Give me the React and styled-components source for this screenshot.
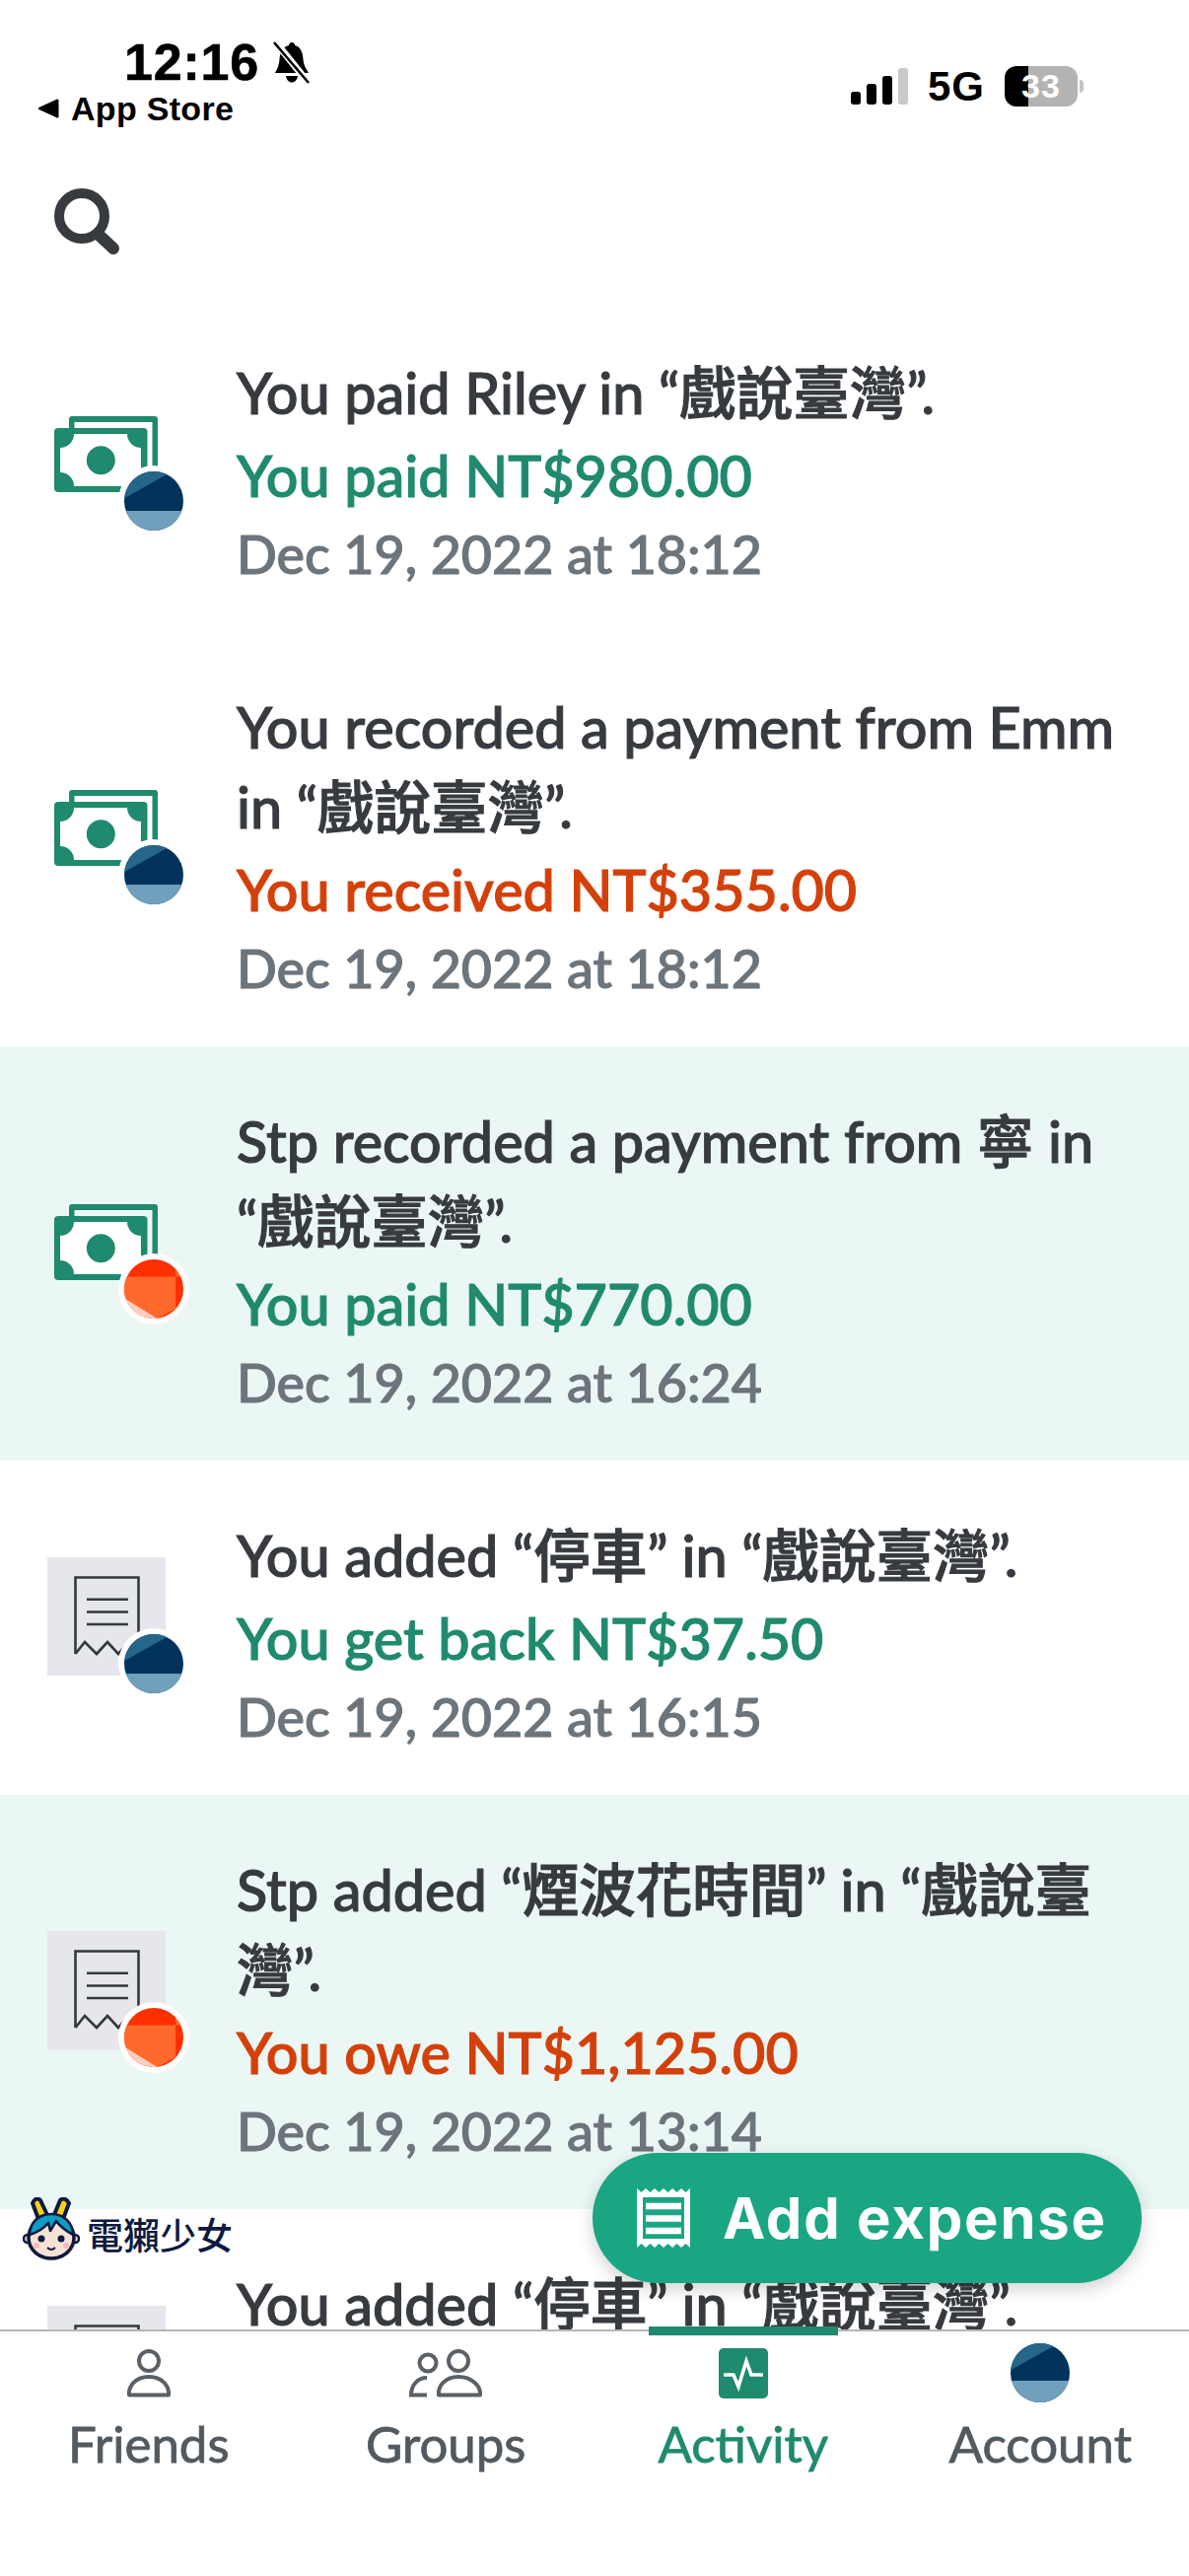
import React from "react";
import styled, { createGlobalStyle } from "styled-components";

const Global = createGlobalStyle`
  html, body { margin: 0; padding: 0; background: #fff; }
  * { box-sizing: border-box; }
`;
const LATO = `Lato, "Noto Sans CJK TC", sans-serif`;
const GREEN = "#1f8a6d";

const Page = styled.div`
  position: relative; width: 1206px; height: 2612px; overflow: hidden;
  display: flex; flex-direction: column; background: #fff; font-family: ${LATO};
`;
const StatusBar = styled.div`
  height: 160px; padding: 38px 107px 0 38px; display: flex; justify-content: space-between;
  font-family: "Liberation Sans", sans-serif; font-weight: 700; color: #000;
`;
const StatusLeft = styled.div`display: flex; flex-direction: column;`;
const TimeRow = styled.div`display: flex; align-items: center; gap: 12px; margin-left: 88px; height: 50px;`;
const Time = styled.span`font-size: 52px; line-height: 50px; letter-spacing: 0.8px; -webkit-text-stroke: 0.6px #000;`;
const BackRow = styled.div`display: flex; align-items: center; gap: 12px; height: 40px; margin-top: 2px;`;
const BackText = styled.span`font-size: 34px; line-height: 40px; letter-spacing: 0.3px;`;
const StatusRight = styled.div`display: flex; align-items: center; height: 41px; margin-top: 29px; gap: 20px;`;
const Net = styled.span`font-size: 42px; line-height: 41px; letter-spacing: 1px;`;
const Battery = styled.div`
  position: relative; width: 74px; height: 41px; border-radius: 12px; overflow: hidden;
  background: linear-gradient(90deg, #000 0 24px, #b3b3b3 24px);
  color: #fff; font-size: 34px; line-height: 41px; text-align: center; letter-spacing: 1px;
`;
const BatteryWrap = styled.div`display: flex; align-items: center; gap: 2px;`;
const BatteryTip = styled.div`width: 4px; height: 13px; border-radius: 0 4px 4px 0; background: #c5c5c5;`;
const SearchRow = styled.div`height: 142px; padding: 31px 0 0 55px;`;
const List = styled.div`flex: 1; min-height: 0; overflow: hidden;`;
const Row = styled.div`
  display: flex; align-items: center; gap: 72px; padding: 55px 60px 41px 48px;
  background: ${p => (p.$hl ? "#ebf7f5" : "#fff")};
`;
const Tile = styled.div`
  position: relative; flex: none; width: 120px; height: 120px; margin-bottom: 38px;
  background: ${p => (p.$receipt ? "#e6e7ec" : "transparent")};
`;
const Body = styled.div`
  flex: 1; min-width: 0; font-weight: 500; -webkit-text-stroke: 1.1px currentColor;
`;
const Title = styled.div`color: #373b3f; font-size: 57.5px; line-height: 81px;`;
const Amount = styled.div`
  margin-top: 3px; color: ${p => (p.$owe ? "#d4400a" : GREEN)}; font-size: 57.5px; line-height: 82px;
`;
const When = styled.div`color: #6c747c; font-size: 53.8px; line-height: 77px;`;
const Nav = styled.nav`
  position: relative; flex: none; height: 250px; background: #fff; border-top: 2px solid #b5b6b8;
  display: grid; grid-template-columns: repeat(4, 1fr);
`;
const Tab = styled.div`
  display: flex; flex-direction: column; align-items: center; height: 144px;
  color: ${p => (p.$active ? GREEN : "#52595f")};
  font-size: 51px; line-height: 60px; -webkit-text-stroke: 0.8px currentColor;
`;
const TabIcon = styled.div`
  height: ${p => (p.$avatar ? 86 : 81)}px; margin-top: ${p => (p.$avatar ? 12 : 17)}px;
  display: flex; align-items: flex-start; justify-content: center;
`;
const Indicator = styled.div`position: absolute; left: 658px; top: -5px; width: 192px; height: 9px; background: ${GREEN};`;
const Fab = styled.div`
  position: absolute; left: 601px; top: 2183px; width: 557px; height: 132px; border-radius: 66px;
  background: #1aa683; color: #fff; display: flex; align-items: center; gap: 33px; padding-left: 45px;
  font-size: 58px; font-weight: 700; letter-spacing: 1.8px;
  box-shadow: 0 6px 18px rgba(0,0,0,.18); font-family: Inter, sans-serif;
`;
const Mark = styled.div`position: absolute; left: 23px; top: 2228px; display: flex; align-items: center; gap: 7px;`;
const MarkText = styled.span`
  font-family: "Noto Sans CJK TC", sans-serif; font-size: 37px; line-height: 50px; font-weight: 500; color: #0e1a3f; margin-top: 10px;
`;

const Cash = () => (
  <svg width="105" height="77" viewBox="0 0 105 77" style={{ position: "absolute", left: 7, top: 22 }}>
    <path d="M15 12V3Q15 0 18 0H102Q105 0 105 3V62H99.5V6H20.5V12Z" fill={GREEN} />
    <rect x="0" y="12" width="94.5" height="65" rx="4" fill={GREEN} />
    <path d="M20 18H74A14 14 0 0 0 88 32V57A14 14 0 0 0 74 71H20A14 14 0 0 0 6 57V32A14 14 0 0 0 20 18Z" fill="#fff" />
    <circle cx="47.3" cy="44.7" r="14.5" fill={GREEN} />
  </svg>
);
const Receipt = () => (
  <svg width="120" height="120" viewBox="0 0 120 120" style={{ position: "absolute", left: 0, top: 0 }} fill="none" stroke="#35393d" strokeWidth="2.6">
    <path d="M28.500 98V20.500H92.500V80" />
    <path d="M28.500 98L38 86L50 98L61 86L72 98L83 86L92 96" />
    <path d="M40 42.700H82M40 55.500H82M40 68H82" />
  </svg>
);
const AvatarSvg = styled.svg`position: absolute; left: 72px; top: 72px;`;
const BlueAvatar = () => (
  <AvatarSvg width="72" height="72" viewBox="-36 -36 72 72">
    <circle r="36" fill="#fff" />
    <clipPath id="ba"><circle r="30" /></clipPath>
    <g clipPath="url(#ba)">
      <rect x="-30" y="-30" width="60" height="60" fill="#00325b" />
      <path d="M-30 -2.700L13.300 -27L13.300 -30H-30Z" fill="#25668a" />
      <rect x="-30" y="10" width="60" height="20" fill="#71a0bd" />
    </g>
  </AvatarSvg>
);
const OrangeAvatar = () => (
  <AvatarSvg width="72" height="72" viewBox="-36 -36 72 72">
    <circle r="36" fill="#fff" />
    <clipPath id="oa"><circle r="30" /></clipPath>
    <g clipPath="url(#oa)">
      <rect x="-30" y="-30" width="60" height="60" fill="#ff2f00" />
      <path d="M-30 9L4 30H-30Z" fill="#fdcdbf" />
      <path d="M-30 -12.500H22V20L4 30L-30 9Z" fill="#ff6a2c" />
      <path d="M22 -12.500L22 -20L30 -12.500Z" fill="#ff6a2c" />
    </g>
  </AvatarSvg>
);

const rows = [
  { k: "cash", a: "b", t: "You paid Riley in “戲說臺灣”.", m: "You paid NT$980.00", d: "Dec 19, 2022 at 18:12" },
  { k: "cash", a: "b", t: "You recorded a payment from Emm in “戲說臺灣”.", m: "You received NT$355.00", owe: true, d: "Dec 19, 2022 at 18:12" },
  { k: "cash", a: "o", hl: true, t: "Stp recorded a payment from 寧 in “戲說臺灣”.", m: "You paid NT$770.00", d: "Dec 19, 2022 at 16:24" },
  { k: "rc", a: "b", t: "You added “停車” in “戲說臺灣”.", m: "You get back NT$37.50", d: "Dec 19, 2022 at 16:15" },
  { k: "rc", a: "o", hl: true, t: "Stp added “煙波花時間” in “戲說臺灣”.", m: "You owe NT$1,125.00", owe: true, d: "Dec 19, 2022 at 13:14" },
  { k: "rc", a: "b", t: "You added “停車” in “戲說臺灣”.", m: "You get back NT$37.50", d: "Dec 19, 2022 at 13:02" },
];

export default function App() {
  return (
    <Page>
      <Global />
      <StatusBar>
        <StatusLeft>
          <TimeRow>
            <Time>12:16</Time>
            <svg width="42" height="44" viewBox="0 0 42 44">
              <path d="M21 2C23 2 24 3.500 24 5C30 6.500 32 12 32.500 19C33 26 36 29 38 33H4C6 29 8 26 8.500 19C9 12 12 6.500 18 5C18 3.500 19 2 21 2Z" fill="#000" />
              <path d="M15 36H27C26.500 40 24 42.500 21 42.500C18 42.500 15.500 40 15 36Z" fill="#000" />
              <path d="M4 1L37 42" stroke="#fff" strokeWidth="7" />
              <path d="M3 2L38 43" stroke="#000" strokeWidth="2.600" />
            </svg>
          </TimeRow>
          <BackRow>
            <svg width="22" height="22" viewBox="0 0 22 22"><path d="M20 1.500Q21.500 1 21.500 3V19Q21.500 21 20 20.500L1.500 12Q0 11 1.500 10Z" fill="#000" /></svg>
            <BackText>App Store</BackText>
          </BackRow>
        </StatusLeft>
        <StatusRight>
          <svg width="58" height="37" viewBox="0 0 58 37">
            <rect x="0" y="24" width="10" height="13" rx="3" fill="#000" />
            <rect x="16" y="16" width="10" height="21" rx="3" fill="#000" />
            <rect x="32" y="8" width="10" height="29" rx="3" fill="#000" />
            <rect x="48" y="0" width="10" height="37" rx="3" fill="#c9c9c9" />
          </svg>
          <Net>5G</Net>
          <BatteryWrap>
            <Battery>33</Battery>
            <BatteryTip />
          </BatteryWrap>
        </StatusRight>
      </StatusBar>
      <SearchRow>
        <svg width="67" height="67" viewBox="0 0 67 67" fill="none" stroke="#373b3f">
          <circle cx="28" cy="28" r="23" strokeWidth="10" />
          <path d="M44 46L60 61" strokeWidth="12" strokeLinecap="round" />
        </svg>
      </SearchRow>
      <List>
        {rows.map((r, i) => (
          <Row key={i} $hl={r.hl}>
            <Tile $receipt={r.k === "rc"}>
              {r.k === "cash" ? <Cash /> : <Receipt />}
              {r.a === "b" ? <BlueAvatar /> : <OrangeAvatar />}
            </Tile>
            <Body>
              <Title>{r.t}</Title>
              <Amount $owe={r.owe}>{r.m}</Amount>
              <When>{r.d}</When>
            </Body>
          </Row>
        ))}
      </List>
      <Nav>
        <Indicator />
        <Tab>
          <TabIcon>
            <svg width="46" height="50" viewBox="0 0 46 50" fill="none" stroke="#5a6066" strokeWidth="4">
              <circle cx="23" cy="13" r="10" />
              <path d="M3 47.500C2 38 10 29 23 29C36 29 44 38 43 47.500Z" strokeLinejoin="round" />
            </svg>
          </TabIcon>
          Friends
        </Tab>
        <Tab>
          <TabIcon>
            <svg width="74" height="50" viewBox="0 0 74 50" fill="none" stroke="#5a6066" strokeWidth="4">
              <circle cx="19" cy="15" r="8.500" />
              <circle cx="50" cy="13" r="10" />
              <path d="M18 47.500H2C2 38 8 30 18 30" />
              <path d="M30 47.500C29 38 37 29 50 29C63 29 73 38 72 47.500Z" strokeLinejoin="round" />
            </svg>
          </TabIcon>
          Groups
        </Tab>
        <Tab $active>
          <TabIcon>
            <svg width="50" height="51" viewBox="0 0 50 51">
              <rect width="50" height="51" rx="5" fill={GREEN} />
              <path d="M5 27H15L20 39L28 13L33 27H45" fill="none" stroke="#fff" strokeWidth="3.500" />
            </svg>
          </TabIcon>
          Activity
        </Tab>
        <Tab>
          <TabIcon $avatar>
            <svg width="60" height="60" viewBox="-30 -30 60 60">
              <clipPath id="na"><circle r="30" /></clipPath>
              <g clipPath="url(#na)">
                <rect x="-30" y="-30" width="60" height="60" fill="#00325b" />
                <path d="M-30 -2.700L13.300 -27V-30H-30Z" fill="#25668a" />
                <rect x="-30" y="8" width="60" height="22" fill="#71a0bd" />
              </g>
            </svg>
          </TabIcon>
          Account
        </Tab>
      </Nav>
      <Mark>
        <svg width="58" height="64" viewBox="0 0 58 64">
          <path d="M16 22L10 6Q13 -1 18 3L26 20Z" fill="#f7cf1c" stroke="#0e1a3f" strokeWidth="4" strokeLinejoin="round" />
          <path d="M31 20L38 3Q43 -1 47 6L41 22Z" fill="#f7cf1c" stroke="#0e1a3f" strokeWidth="4" strokeLinejoin="round" />
          <circle cx="5" cy="42" r="4" fill="#f2d9c8" stroke="#0e1a3f" strokeWidth="2.500" />
          <circle cx="53" cy="42" r="4" fill="#f2d9c8" stroke="#0e1a3f" strokeWidth="2.500" />
          <ellipse cx="29" cy="41" rx="23" ry="21" fill="#f6e2d3" stroke="#0e1a3f" strokeWidth="3.500" />
          <path d="M7 38C7 26 16 17 29 17C42 17 51 26 51 38C44 34 38 30 34 24L28 34L26 26C21 32 14 36 7 38Z" fill="#119cc4" stroke="#0e1a3f" strokeWidth="2.500" strokeLinejoin="round" />
          <circle cx="19" cy="42" r="3.500" fill="#0e1a3f" />
          <circle cx="39" cy="42" r="3.500" fill="#0e1a3f" />
          <circle cx="14" cy="49" r="3" fill="#f6b8bd" />
          <circle cx="44" cy="49" r="3" fill="#f6b8bd" />
          <path d="M25 51Q29 55 33 51" fill="none" stroke="#0e1a3f" strokeWidth="2" />
        </svg>
        <MarkText>電獺少女</MarkText>
      </Mark>
      <Fab>
        <svg width="54" height="60" viewBox="0 0 54 60" style={{ flex: "none" }}>
          <path d="M0 0l4.500 4l4.500 -4l4.500 4l4.500 -4l4.500 4l4.500 -4l4.500 4l4.500 -4l4.500 4l4.500 -4l4.500 4l4.500 -4V60l-4.500 -4l-4.500 4l-4.500 -4l-4.500 4l-4.500 -4l-4.500 4l-4.500 -4l-4.500 4l-4.500 -4l-4.500 4l-4.500 -4l-4.500 4Z" fill="#fff" />
          <rect x="6" y="9" width="42" height="42" fill="#1aa683" />
          <path d="M9 18H45M9 30.500H45M9 43H45" stroke="#fff" strokeWidth="6.500" />
        </svg>
        Add expense
      </Fab>
    </Page>
  );
}
